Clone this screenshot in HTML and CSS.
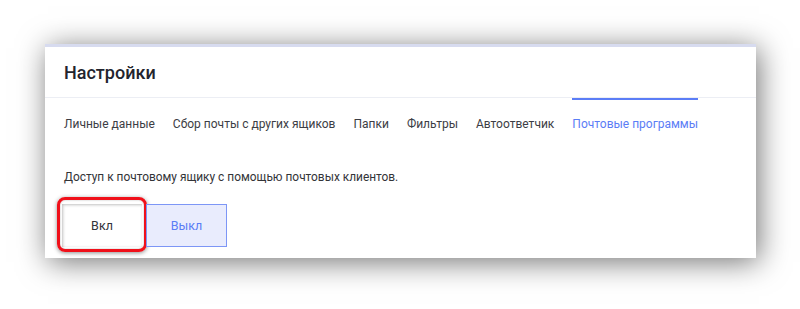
FILE: index.html
```html
<!DOCTYPE html>
<html lang="ru">
<head>
<meta charset="utf-8">
<title>Настройки</title>
<link rel="stylesheet" href="styles.css">
</head>
<body>
<div class="card">
  <div class="header">Настройки</div>
  <nav class="tabs">
    <span class="tab">Личные данные</span>
    <span class="tab">Сбор почты с других ящиков</span>
    <span class="tab">Папки</span>
    <span class="tab">Фильтры</span>
    <span class="tab">Автоответчик</span>
    <span class="tab active">Почтовые программы</span>
  </nav>
  <p class="desc">Доступ к почтовому ящику с помощью почтовых клиентов.</p>
  <div class="buttons">
    <div class="btn on">Вкл<span class="highlight"></span></div>
    <div class="btn off">Выкл</div>
  </div>
</div>
</body>
</html>
```
FILE: styles.css
```css
html, body {
  margin: 0;
  background: #ffffff;
  font-family: Roboto, "Liberation Sans", Arial, sans-serif;
}
body {
  min-height: 309px;
  overflow: hidden;
}
.card {
  margin: 44px 0 0 45px;
  width: 711px;
  height: 211px;
  background: #ffffff;
  border-top: 3px solid #d7dbef;
  box-shadow: 3px 4px 28px rgba(0, 0, 0, 0.55);
}
.header {
  height: 50px;
  display: flex;
  align-items: center;
  padding-left: 19px;
  border-bottom: 1px solid #eceef4;
  font-size: 18px;
  font-weight: 500;
  color: #23242e;
}
.tabs {
  display: flex;
  gap: 18px;
  padding-left: 19px;
}
.tab {
  border-top: 2px solid transparent;
  padding-top: 16px;
  line-height: 16px;
  font-size: 12px;
  color: #3c3d44;
  white-space: nowrap;
}
.tab.active {
  border-top-color: #5b7df6;
  color: #5b7df6;
}
.desc {
  margin: 37px 0 0 19px;
  line-height: 16px;
  font-size: 11.9px;
  color: #333438;
}
.buttons {
  display: flex;
  gap: 4px;
  margin: 19px 0 0 17px;
}
.btn {
  position: relative;
  width: 80px;
  height: 43px;
  display: flex;
  align-items: center;
  justify-content: center;
  font-size: 12.5px;
  box-sizing: border-box;
}
.btn.on {
  background: #ffffff;
  color: #33343a;
  box-shadow: inset 1px 1px 3px rgba(0, 0, 0, 0.25);
}
.btn.off {
  width: 81px;
  background: #e9ecfd;
  border: 1px solid #7d96f6;
  color: #5b7df6;
}
.highlight {
  position: absolute;
  left: -5px;
  top: -7px;
  right: -5px;
  bottom: -5px;
  border: 3px solid #f0101a;
  border-radius: 8px;
  box-shadow: 0 1px 4px rgba(0, 0, 0, 0.45), inset 0 0 2px rgba(0, 0, 0, 0.3);
}
```
